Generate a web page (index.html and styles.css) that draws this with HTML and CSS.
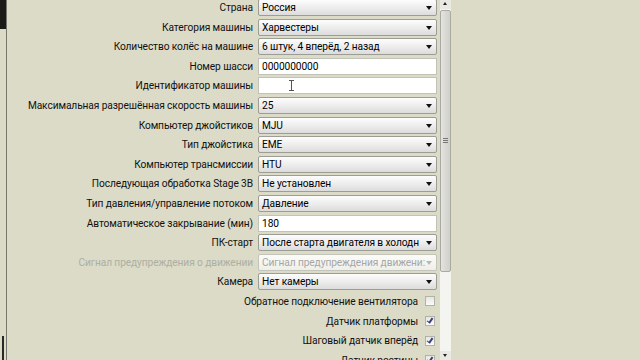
FILE: index.html
```html
<!DOCTYPE html>
<html lang="ru">
<head>
    <meta charset="UTF-8">
    <title>Настройки машины</title>
    <link rel="stylesheet" href="styles.css">
</head>
<body>
    <div class="edge">
        <div class="edge-top"></div>
        <div class="edge-bottom"></div>
    </div>

    <div class="form">
        <label>Страна</label>
        <div class="select">Россия<span class="arrow"></span></div>

        <label>Категория машины</label>
        <div class="select">Харвестеры<span class="arrow"></span></div>

        <label>Количество колёс на машине</label>
        <div class="select">6 штук, 4 вперёд, 2 назад<span class="arrow"></span></div>

        <label>Номер шасси</label>
        <div class="input">0000000000</div>

        <label>Идентификатор машины</label>
        <div class="input"><span class="ibeam"></span></div>

        <label>Максимальная разрешённая скорость машины</label>
        <div class="select">25<span class="arrow"></span></div>

        <label>Компьютер джойстиков</label>
        <div class="select">MJU<span class="arrow"></span></div>

        <label>Тип джойстика</label>
        <div class="select">EME<span class="arrow"></span></div>

        <label>Компьютер трансмиссии</label>
        <div class="select">HTU<span class="arrow"></span></div>

        <label>Последующая обработка Stage 3B</label>
        <div class="select">Не установлен<span class="arrow"></span></div>

        <label>Тип давления/управление потоком</label>
        <div class="select">Давление<span class="arrow"></span></div>

        <label>Автоматическое закрывание (мин)</label>
        <div class="input">180</div>

        <label>ПК-старт</label>
        <div class="select">После старта двигателя в холодн<span class="arrow"></span></div>

        <label class="disabled">Сигнал предупреждения о движении</label>
        <div class="select disabled">Сигнал предупреждения движени:<span class="arrow"></span></div>

        <label>Камера</label>
        <div class="select">Нет камеры<span class="arrow"></span></div>

        <div class="check">Обратное подключение вентилятора<span class="box"></span></div>
        <div class="check">Датчик платформы<span class="box checked"></span></div>
        <div class="check">Шаговый датчик вперёд<span class="box checked"></span></div>
        <div class="check">Датчик ростины<span class="box checked"></span></div>
    </div>

    <div class="scrollbar">
        <div class="scroll-up"></div>
        <div class="track">
            <div class="thumb"><span class="grip"></span></div>
        </div>
        <div class="scroll-down"></div>
    </div>
</body>
</html>
```

FILE: styles.css
```css
body {
    margin: 0;
    padding: 0;
    width: 640px;
    height: 360px;
    overflow: hidden;
    background-color: #dbdbc7;
    color: #111;
    font-family: Roboto, 'Liberation Sans', Arial, sans-serif;
    font-size: 10.2px;
    letter-spacing: -0.1px;
    display: flex;
}

.edge {
    width: 6px;
    border-right: 1px solid #76786f;
    display: flex;
    flex-direction: column;
    justify-content: space-between;
    flex-shrink: 0;
}

.edge-top {
    height: 29px;
    background: #1a1a18;
}

.edge-bottom {
    height: 24px;
    width: 2px;
    margin-left: 2px;
    background: #2a2a24;
}

.form {
    width: 430px;
    margin-top: -1px;
    display: grid;
    grid-template-columns: 1fr 179px;
    grid-auto-rows: 17px;
    column-gap: 5px;
    row-gap: 2.6px;
    align-content: start;
    flex-shrink: 0;
}

.form label {
    text-align: right;
    line-height: 17px;
    white-space: nowrap;
}

.form label.disabled {
    color: #aeafa2;
}

.select,
.input {
    position: relative;
    box-sizing: border-box;
    height: 17px;
    line-height: 15px;
    padding: 0 14px 0 3px;
    border: 1px solid #9c9d94;
    border-radius: 2px;
    white-space: nowrap;
    overflow: hidden;
    color: #000;
}

.select {
    background: linear-gradient(#fdfdfd, #ececec 55%, #dcdcdc);
}

.select.disabled {
    color: #a6a6a6;
    border-color: #c4c5ba;
    background: linear-gradient(#fbfbf8, #efefea);
}

.input {
    background: #fff;
    border-color: #c2c3b8;
    border-radius: 0;
}

.arrow {
    position: absolute;
    right: 4px;
    top: 6px;
    width: 0;
    height: 0;
    border-left: 3px solid transparent;
    border-right: 3px solid transparent;
    border-top: 4px solid #111;
}

.select.disabled .arrow {
    border-top-color: #b8b8b8;
}

.ibeam {
    position: absolute;
    left: 32px;
    top: 2px;
    width: 1px;
    height: 11px;
    background: #555;
}

.ibeam::before,
.ibeam::after {
    content: '';
    position: absolute;
    left: -2px;
    width: 5px;
    height: 1px;
    background: #555;
}

.ibeam::before { top: 0; }
.ibeam::after { bottom: 0; }

.check {
    grid-column: 1 / 3;
    display: flex;
    justify-content: flex-end;
    align-items: center;
    gap: 7px;
    padding-right: 2px;
}

.box {
    width: 8px;
    height: 8px;
    border: 1px solid #b2b3a8;
    background: linear-gradient(#e6e6e2, #fafaf8);
    position: relative;
}

.box.checked::after {
    content: '';
    position: absolute;
    left: 2px;
    top: 0;
    width: 2px;
    height: 5px;
    border-right: 2px solid #3a3f7a;
    border-bottom: 1px solid #3a3f7a;
    transform: rotate(35deg);
}

.scrollbar {
    width: 11px;
    margin-left: 3px;
    display: flex;
    flex-direction: column;
    background: #f2f2ee;
    flex-shrink: 0;
}

.scroll-up,
.scroll-down {
    height: 9px;
    position: relative;
    background: #e9e9e4;
}

.scroll-up::after,
.scroll-down::after {
    content: '';
    position: absolute;
    left: 3px;
    width: 0;
    height: 0;
    border-left: 2px solid transparent;
    border-right: 2px solid transparent;
}

.scroll-up::after {
    top: 2px;
    border-bottom: 3px solid #222;
}

.scroll-down::after {
    bottom: 3px;
    border-top: 3px solid #222;
}

.track {
    flex: 1;
    padding: 1px 0;
    background: #f4f4f1;
}

.thumb {
    height: 262px;
    box-sizing: border-box;
    border: 1px solid #a9aaa2;
    border-radius: 2px;
    background: linear-gradient(90deg, #e4e4e0, #cfd0ca);
    position: relative;
}

.grip {
    position: absolute;
    left: 2px;
    top: 127px;
    width: 5px;
    height: 5px;
    background: repeating-linear-gradient(#777 0 1px, transparent 1px 2px);
}
```
